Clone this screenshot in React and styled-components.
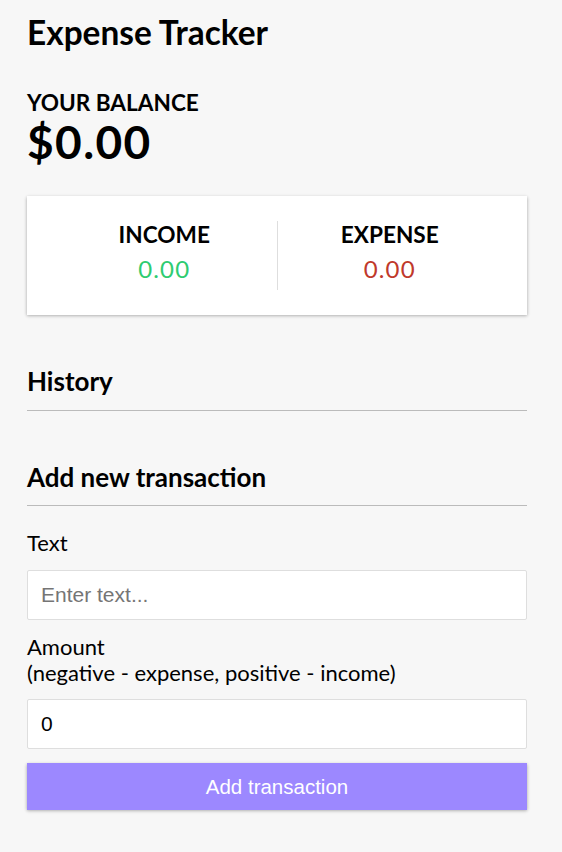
import React from "react";
import styled, { createGlobalStyle } from "styled-components";

const GlobalStyle = createGlobalStyle`
  * {
    box-sizing: border-box;
  }

  body {
    margin: 0;
    background-color: #f7f7f7;
    font-family: Lato, "Liberation Sans", sans-serif;
    color: #000;
  }
`;

const shadow = "0 1.4px 4px rgba(0, 0, 0, 0.12), 0 1.4px 3px rgba(0, 0, 0, 0.24)";

const Container = styled.div`
  width: 500px;
  margin-left: 27px;
  padding: 12px 0 0;
`;

const Title = styled.h2`
  margin: 0 0 38.5px;
  font-size: 33.4px;
  font-weight: 700;
  line-height: 1.2;
`;

const Label4 = styled.h4`
  margin: 0;
  font-size: 22.6px;
  font-weight: 700;
  line-height: 1.1;
  text-transform: uppercase;
`;

const Balance = styled.h1`
  margin: 1.5px 0 0;
  font-size: 46px;
  font-weight: 700;
  letter-spacing: 1.4px;
  line-height: 1.1;
`;

const IncExp = styled.div`
  display: flex;
  justify-content: space-between;
  margin: 28px 0 0;
  padding: 25px;
  background-color: #fff;
  box-shadow: ${shadow};
`;

const Column = styled.div`
  flex: 1;
  text-align: center;

  &:first-of-type {
    border-right: 1px solid #dedede;
  }

  ${Label4} {
    line-height: 1.2;
  }
`;

const Money = styled.p`
  margin: 7px 0;
  font-size: 24px;
  letter-spacing: 1.2px;
  line-height: 1.2;
  color: ${(p) => (p.$minus ? "#c0392b" : "#2ecc71")};
`;

const SectionTitle = styled.h3`
  margin: 51px 0 10px;
  padding-bottom: 12px;
  border-bottom: 1px solid #bbb;
  font-size: 26px;
  font-weight: 700;
  line-height: 1.2;
`;

const Field = styled.div``;

const Label = styled.label`
  display: inline-block;
  margin: 14.3px 0;
  font-size: 22px;
  line-height: 25.5px;
`;

const Input = styled.input`
  display: block;
  width: 100%;
  margin: 0;
  padding: 12px 13px;
  border: 1px solid #dedede;
  border-radius: 2px;
  background: #fff;
  font-family: "Liberation Sans", Arial, sans-serif;
  font-size: 21px;
  line-height: 24px;
  color: #000;
  outline: none;

  &::placeholder {
    color: #757575;
  }
`;

const Button = styled.button`
  display: block;
  width: 100%;
  margin: 13.4px 0 30px;
  padding: 11.8px;
  border: 0;
  background-color: #9c88ff;
  box-shadow: ${shadow};
  color: #fff;
  font-family: "Liberation Sans", Arial, sans-serif;
  font-size: 20.5px;
  line-height: 24px;
  cursor: pointer;
`;

export default function App() {
  return (
    <>
      <GlobalStyle />
      <Container>
        <Title>Expense Tracker</Title>

        <Label4>Your Balance</Label4>
        <Balance>$0.00</Balance>

        <IncExp>
          <Column>
            <Label4>Income</Label4>
            <Money>0.00</Money>
          </Column>
          <Column>
            <Label4>Expense</Label4>
            <Money $minus>0.00</Money>
          </Column>
        </IncExp>

        <SectionTitle>History</SectionTitle>

        <SectionTitle>Add new transaction</SectionTitle>
        <form onSubmit={(e) => e.preventDefault()}>
          <Field>
            <Label htmlFor="text">Text</Label>
            <Input type="text" id="text" placeholder="Enter text..." />
          </Field>
          <Field>
            <Label htmlFor="amount">
              Amount <br />
              (negative - expense, positive - income)
            </Label>
            <Input type="number" id="amount" defaultValue="0" />
          </Field>
          <Button type="submit">Add transaction</Button>
        </form>
      </Container>
    </>
  );
}
